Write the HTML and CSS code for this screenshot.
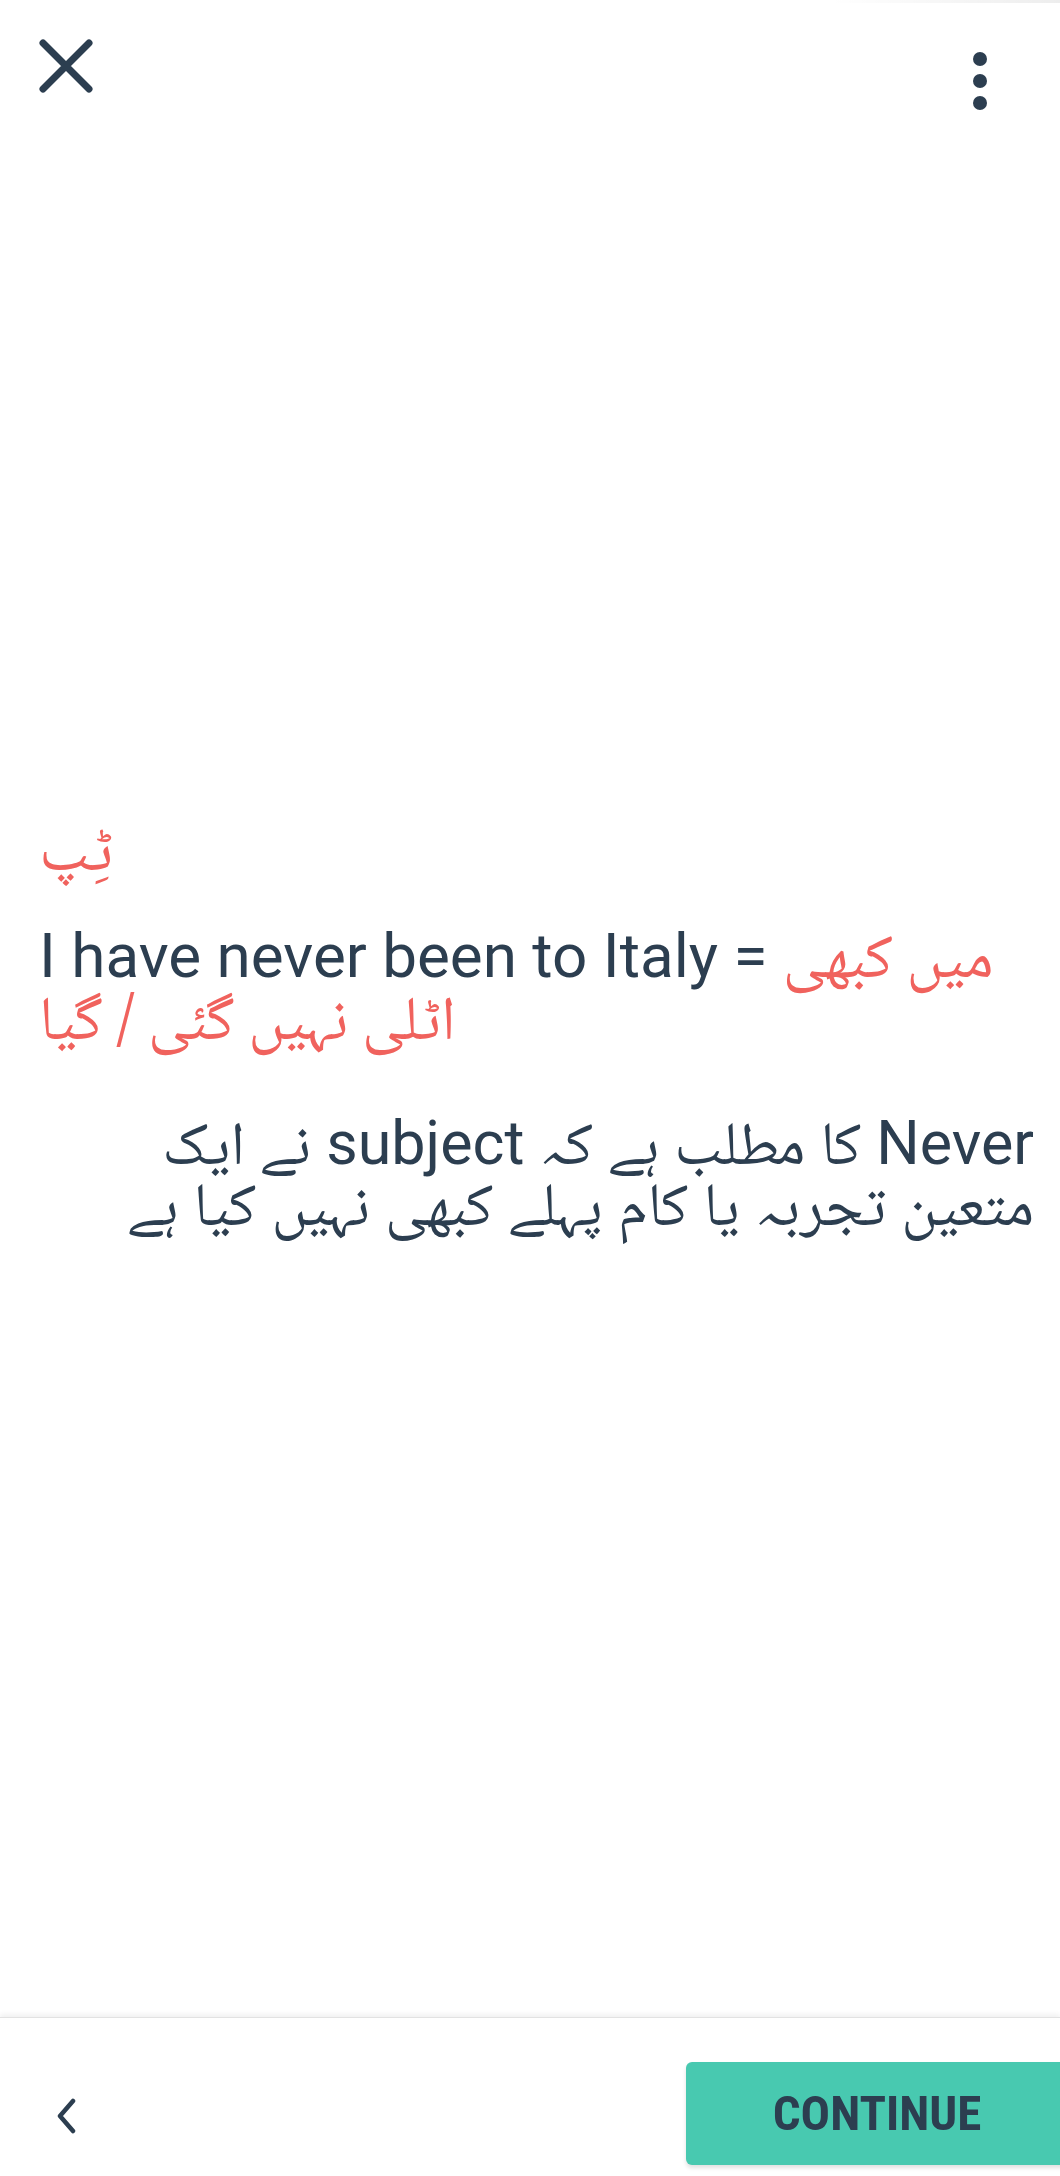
FILE: index.html
```html
<!DOCTYPE html>
<html lang="ur">
<head>
<meta charset="utf-8">
<title>Tip</title>
<link rel="stylesheet" href="styles.css">
</head>
<body>
<div class="screen">
  <div class="status-edge"><span class="edge-shade"></span></div>
  <header class="header">
    <svg class="icon-close" width="54" height="54" viewBox="0 0 54 54" aria-label="Close">
      <path d="M4 4 L50 50 M50 4 L4 50" stroke="#2c3e50" stroke-width="7" stroke-linecap="round" fill="none"/>
    </svg>
    <svg class="icon-more" width="16" height="60" viewBox="0 0 16 60" aria-label="More">
      <circle cx="8" cy="7" r="7" fill="#2c3e50"/>
      <circle cx="8" cy="29" r="7" fill="#2c3e50"/>
      <circle cx="8" cy="51" r="7" fill="#2c3e50"/>
    </svg>
  </header>

  <main class="content">
    <div class="tip-title" dir="rtl">ٹِپ</div>
    <div class="example">
      <div class="example-line">I have never been to Italy = <span class="ur red">میں کبھی</span></div>
      <div class="example-line"><span class="ur red" dir="rtl">اٹلی نہیں گئی / گیا</span></div>
    </div>
    <div class="explain" dir="rtl">
      <div class="explain-line">Never کا مطلب ہے کہ subject نے ایک</div>
      <div class="explain-line">متعین تجربہ یا کام پہلے کبھی نہیں کیا ہے</div>
    </div>
  </main>

  <footer class="footer">
    <svg class="icon-back" width="24" height="36" viewBox="0 0 24 36" aria-label="Back">
      <path d="M19 3 L6 18 L19 33" stroke="#2c3e50" stroke-width="4.5" stroke-linecap="round" stroke-linejoin="round" fill="none"/>
    </svg>
    <button class="continue">CONTINUE</button>
  </footer>
</div>
</body>
</html>
```
FILE: styles.css
```css
html, body {
  margin: 0;
  padding: 0;
  background: #ffffff;
}
body {
  font-family: Roboto, "Noto Naskh Arabic", "Noto Sans Arabic", "DejaVu Sans", sans-serif;
  color: #2c3e50;
  overflow: hidden;
}
.screen {
  width: 1060px;
  height: 2176px;
  display: flex;
  flex-direction: column;
  overflow: hidden;
}
.status-edge {
  height: 3px;
  display: flex;
  justify-content: flex-end;
}
.edge-shade {
  width: 230px;
  height: 3px;
  background: linear-gradient(to right, rgba(0,0,0,0), rgba(0,0,0,0.07));
}
.header {
  height: 127px;
  display: flex;
  justify-content: space-between;
  align-items: flex-start;
  padding: 36px 72px 0 39px;
  box-sizing: border-box;
}
.icon-more {
  margin-top: 13px;
}
.content {
  flex: 1;
  padding: 696px 26px 0 39px;
}
.ur {
  font-family: "Noto Naskh Arabic", "Noto Sans Arabic", "DejaVu Sans", sans-serif;
}
.red {
  color: #f0625d;
}
.tip-title {
  font-family: "Noto Naskh Arabic", "Noto Sans Arabic", "DejaVu Sans", sans-serif;
  color: #f0625d;
  font-size: 64px;
  line-height: 62px;
  height: 62px;
  text-align: left;
  width: max-content;
}
.example {
  margin-top: 37px;
  font-size: 62px;
  line-height: 62px;
}
.example-line {
  white-space: nowrap;
  height: 62px;
}
.explain {
  margin-top: 64px;
  font-size: 61px;
  line-height: 61px;
  text-align: right;
}
.explain-line {
  white-space: nowrap;
  height: 61px;
}
.footer {
  height: 159px;
  box-sizing: border-box;
  border-top: 1px solid #e2e2e2;
  box-shadow: 0 -3px 5px rgba(0,0,0,0.06);
  display: flex;
  align-items: flex-start;
  justify-content: space-between;
  padding-top: 44px;
  padding-left: 54px;
  background: #ffffff;
}
.icon-back {
  margin-top: 36px;
}
.continue {
  width: 382px;
  height: 103px;
  margin-right: -8px;
  border: none;
  border-radius: 6px;
  background: #48c9b0;
  box-shadow: 0 3px 4px rgba(0,0,0,0.12);
  color: #2c3e50;
  font-family: "Roboto Condensed", Roboto, sans-serif;
  font-weight: 700;
  font-size: 49px;
  padding: 0;
  cursor: pointer;
}
```
